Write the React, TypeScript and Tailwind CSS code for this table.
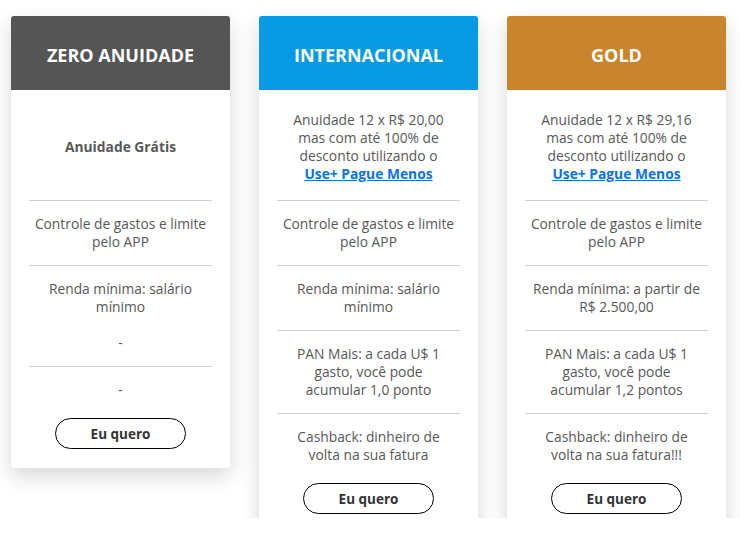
import React from "react";

const font = { fontFamily: '"Open Sans", "Liberation Sans", sans-serif' };

function Link() {
  return (
    <a className="font-bold underline text-[#0b72e7]" href="#">
      Use+ Pague Menos
    </a>
  );
}

function Lines({ lines }: { lines: React.ReactNode[] }) {
  return (
    <p>
      {lines.map((l, i) => (
        <span key={i} className="block whitespace-nowrap">
          {l}
        </span>
      ))}
    </p>
  );
}

function Card({
  title,
  color,
  first,
  rows,
}: {
  title: string;
  color: string;
  first: React.ReactNode;
  rows: React.ReactNode[][][];
}) {
  return (
    <div className="w-[219px] shrink-0 bg-white rounded-[3px] overflow-hidden shadow-[0_8px_20px_rgba(0,0,0,0.16)]">
      <div className={`h-[74px] pt-[4px] flex items-center justify-center text-white font-bold text-[18px] ${color}`}>
        {title}
      </div>
      <div className="px-[18px] text-[13.8px] leading-[18px] text-[#585858] text-center">
        <div className="h-[110px] pt-[4px] flex items-center justify-center">{first}</div>
        {rows.map((r, i) => (
          <div
            key={i}
            className={`border-t border-[#d0d0d0] pt-[14px] ${i === rows.length - 1 ? "pb-0" : "pb-[14px]"} flex flex-col gap-[18px]`}
          >
            {r.map((p, j) => (
              <Lines key={j} lines={p} />
            ))}
          </div>
        ))}
        <div className="pt-[19px] pb-[19px] flex justify-center">
          <button className="w-[131px] h-[31px] rounded-full border border-black text-[13.5px] font-bold text-[#333]">
            Eu quero
          </button>
        </div>
      </div>
    </div>
  );
}

export default function App() {
  return (
    <div className="w-[740px] h-[548px] bg-white" style={font}>
      <div className="h-[518px] overflow-hidden flex items-start gap-[29px] pl-[11px] pt-[16px]">
        <Card
          title="ZERO ANUIDADE"
          color="bg-[#555555]"
          first={<p className="font-bold">Anuidade Grátis</p>}
          rows={[
            [["Controle de gastos e limite", "pelo APP"]],
            [["Renda mínima: salário", "mínimo"], ["-"]],
            [["-"]],
          ]}
        />
        <Card
          title="INTERNACIONAL"
          color="bg-[#059ae2]"
          first={
            <Lines
              lines={[
                "Anuidade 12 x R$ 20,00",
                "mas com até 100% de",
                "desconto utilizando o",
                <Link key="l" />,
              ]}
            />
          }
          rows={[
            [["Controle de gastos e limite", "pelo APP"]],
            [["Renda mínima: salário", "mínimo"]],
            [["PAN Mais: a cada U$ 1", "gasto, você pode", "acumular 1,0 ponto"]],
            [["Cashback: dinheiro de", "volta na sua fatura"]],
          ]}
        />
        <Card
          title="GOLD"
          color="bg-[#c9852b]"
          first={
            <Lines
              lines={[
                "Anuidade 12 x R$ 29,16",
                "mas com até 100% de",
                "desconto utilizando o",
                <Link key="l" />,
              ]}
            />
          }
          rows={[
            [["Controle de gastos e limite", "pelo APP"]],
            [["Renda mínima: a partir de", "R$ 2.500,00"]],
            [["PAN Mais: a cada U$ 1", "gasto, você pode", "acumular 1,2 pontos"]],
            [["Cashback: dinheiro de", "volta na sua fatura!!!"]],
          ]}
        />
      </div>
    </div>
  );
}
